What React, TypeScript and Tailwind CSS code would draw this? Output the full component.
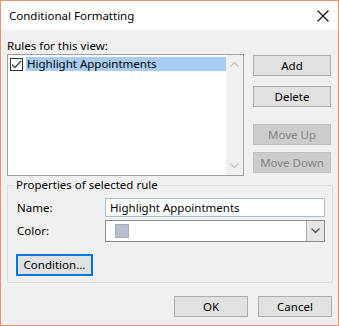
import React from 'react';

const font = { fontFamily: '"Noto Sans", "Liberation Sans", sans-serif' };

function DlgButton({ label, disabled, focused, className = '' }: { label: string; disabled?: boolean; focused?: boolean; className?: string }) {
  const base = 'flex items-center justify-center text-[11.5px] leading-none';
  const look = disabled
    ? 'bg-[#cccccc] border border-[#bfbfbf] text-[#838383]'
    : focused
      ? 'bg-[#e1e1e1] border-2 border-[#0078d7] text-black'
      : 'bg-[#e1e1e1] border border-[#adadad] text-black';
  return <div className={`${base} ${look} ${className}`}>{label}</div>;
}

function Chevron({ up, color = '#c2c2c2' }: { up?: boolean; color?: string }) {
  return (
    <svg width="9" height="6" viewBox="0 0 9 6">
      <path d={up ? 'M0.5 5.5 L4.5 1.5 L8.5 5.5' : 'M0.5 0.5 L4.5 4.5 L8.5 0.5'} fill="none" stroke={color} strokeWidth="1.3" />
    </svg>
  );
}

export default function App() {
  return (
    <div className="w-[339px] h-[326px] border border-[#e9936f] flex flex-col bg-[#f0f0f0] text-black" style={font}>
      {/* Title bar */}
      <div className="h-[29px] bg-white flex items-center justify-between pl-[8px] pr-[9px]">
        <span className="text-[11.5px]">Conditional Formatting</span>
        <svg width="12" height="12" viewBox="0 0 12 12">
          <path d="M0.5 0.5 L11.5 11.5 M11.5 0.5 L0.5 11.5" stroke="#111" strokeWidth="1.1" />
        </svg>
      </div>

      <div className="flex-1 pl-[6px] pt-[8px]">
        <div className="h-[16px] leading-[16px] text-[11.5px]">Rules for this view:</div>

        <div className="flex">
          {/* list box */}
          <div className="w-[237px] h-[122px] border border-[#a0a0a0] bg-white flex">
            <div className="flex-1 pt-[2px] pl-[2px]">
              <div className="flex items-center h-[14px]">
                <div className="w-[13px] h-[13px] border border-[#333333] bg-white flex items-center justify-center">
                  <svg width="11" height="9" viewBox="0 0 11 9">
                    <path d="M1 4.5 L4 7.5 L10 1" fill="none" stroke="#2a4a4a" strokeWidth="1.3" />
                  </svg>
                </div>
                <div className="ml-[3px] flex-1 h-[14px] bg-[#a8cdf1] flex items-center pl-[1px] text-[11.5px]">Highlight Appointments</div>
              </div>
            </div>
            <div className="w-[17px] bg-[#f0f0f0] flex flex-col items-center justify-between py-[6px]">
              <Chevron up />
              <Chevron />
            </div>
          </div>

          {/* side buttons */}
          <div className="ml-[9px] pt-[1px] flex flex-col">
            <DlgButton label="Add" className="w-[78px] h-[21px]" />
            <DlgButton label="Delete" className="w-[78px] h-[21px] mt-[10px]" />
            <DlgButton label="Move Up" disabled className="w-[78px] h-[21px] mt-[17px]" />
            <DlgButton label="Move Down" disabled className="w-[78px] h-[21px] mt-[7px]" />
          </div>
        </div>

        {/* group box */}
        <fieldset className="w-[326px] h-[106px] mt-[1px] border border-[#dcdcdc]">
          <legend className="ml-[6px] px-[2px] h-[16px] leading-[16px] text-[11.5px]">Properties of selected rule</legend>
          <div className="pl-[9px]">
            <div className="flex items-center mt-[5px]">
              <span className="w-[88px] text-[11.5px]">Name:</span>
              <div className="w-[220px] h-[19px] border border-[#a3bcd8] bg-white flex items-center pl-[4px] text-[11.5px]">
                Highlight Appointments
              </div>
            </div>
            <div className="flex items-center mt-[3px]">
              <span className="w-[88px] text-[11.5px]">Color:</span>
              <div className="w-[220px] h-[22px] border border-[#8c8c8c] bg-white flex items-center">
                <div className="ml-[9px] w-[14px] h-[14px] bg-[#b8bfcc] border border-[#a7afbe]" />
                <div className="ml-auto w-[18px] h-full bg-[#e5e5e5] border-l border-[#acacac] flex items-center justify-center">
                  <Chevron color="#555555" />
                </div>
              </div>
            </div>
            <DlgButton label="Condition..." focused className="w-[77px] h-[22px] mt-[12px] -ml-[1px]" />
          </div>
        </fieldset>

        <div className="flex mt-[13px] pl-[167px]">
          <DlgButton label="OK" className="w-[74px] h-[21px]" />
          <DlgButton label="Cancel" className="w-[74px] h-[21px] ml-[10px]" />
        </div>
      </div>
    </div>
  );
}
